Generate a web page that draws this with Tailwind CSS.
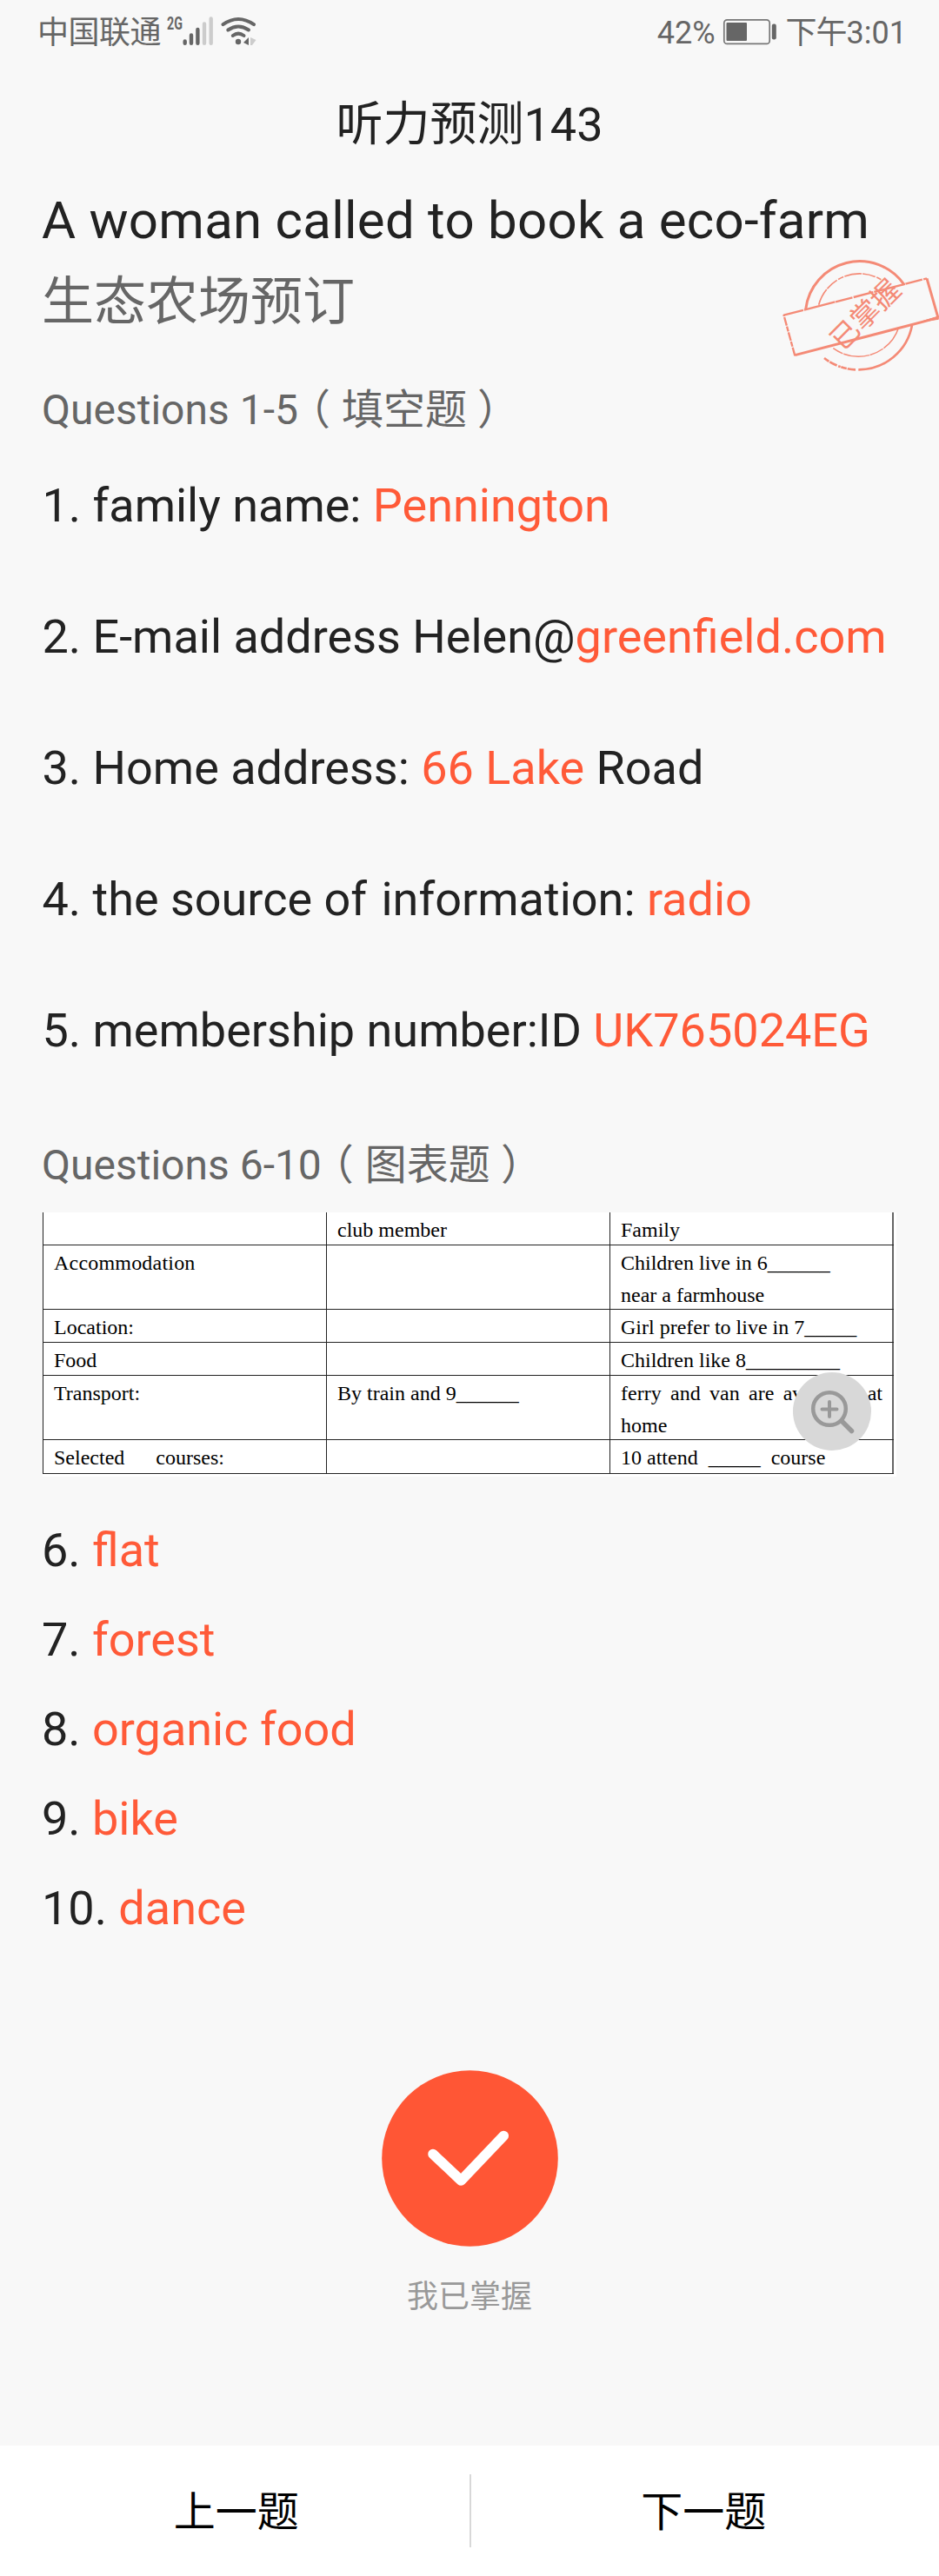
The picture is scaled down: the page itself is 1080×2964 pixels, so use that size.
<!DOCTYPE html>
<html lang="zh-CN">
<head>
    <meta charset="UTF-8">
    <meta name="viewport" content="width=device-width, initial-scale=1.0">
    <title>听力预测143</title>
    <script src="https://cdn.jsdelivr.net/npm/@tailwindcss/browser@4"></script>
</head>
<body class="bg-[#f8f8f8] text-[#222] font-['Roboto','Noto_Sans_CJK_SC',sans-serif]">
    <div class="w-[1080px] h-[2964px] flex flex-col overflow-hidden">
        <!-- Status bar -->
        <div class="h-[76px] shrink-0 flex justify-between pl-[43px] pr-[37px] text-[36px] leading-[76px] text-[#666]">
            <div class="flex">
                <span class="tracking-[-0.5px]">中国联通</span>
                <svg class="w-[106px] h-[76px] ml-[5px]" viewBox="190 0 106 76" fill="none">
                    <text x="192" y="34" font-size="21" font-weight="700" textLength="18" lengthAdjust="spacingAndGlyphs" fill="#666">2G</text>
                    <g stroke-width="4.4" stroke-linecap="round">
                        <path d="M212.7 47.5v2.3M220 40.5v9.3M227.4 34v15.8" stroke="#666"/>
                        <path d="M235 27.5v22.3M242.7 21.5v28.3" stroke="#ccc"/>
                    </g>
                    <g stroke="#666" stroke-width="4" stroke-linecap="round">
                        <path d="M256.500 28.200Q274 15.800 292 28.200"/>
                        <path d="M262.300 34.500Q274 26.500 286 34.500"/>
                        <path d="M267.800 41Q274 36.300 280.500 41"/>
                    </g>
                    <circle cx="274" cy="48" r="3.2" fill="#666"/>
                    <path d="M280 49L286 43V52Z" fill="#666"/>
                    <path d="M288 43L294.500 46L290 52H288Z" fill="#ccc"/>
                </svg>
            </div>
            <div class="flex">
                <span>42%</span>
                <svg class="w-[62px] h-[76px] ml-[8px] mr-[11px]" viewBox="831 0 62 76" fill="none">
                    <rect x="832.8" y="22.800" width="52.400" height="27.600" rx="3.500" stroke="#777" stroke-width="1.700"/>
                    <rect x="835.500" y="26" width="23.500" height="21" rx="1" fill="#666"/>
                    <rect x="887.800" y="27.500" width="5" height="18" rx="2.200" fill="#666"/>
                </svg>
                <span class="tracking-[-1px]">下午</span><span>3:01</span>
            </div>
        </div>

        <header class="h-[135px] shrink-0 text-[54px] leading-[136px] text-center">听力预测143</header>

        <main class="relative px-[48px]">
            <h1 class="text-[60px] leading-[85px] tracking-[0.25px] whitespace-nowrap">A woman called to book a eco-farm</h1>
            <p class="pt-[2px] text-[60px] leading-[99px] text-[#666]">生态农场预订</p>

            <!-- Stamp -->
            <svg class="absolute left-[880px] top-[69px] w-[200px] h-[160px]" viewBox="0 0 600 480" fill="none" stroke="#f48a76">
                <path d="M140 228A187 187 0 0 1 480 143" stroke-width="9"/>
                <path d="M507 283A187 187 0 0 1 322 436" stroke-width="8"/>
                <path d="M312 436A187 187 0 0 1 203 395" stroke-width="8" stroke-dasharray="28 3 20 2 8 5"/>
                <path d="M185 212A146 146 0 0 1 400 125" stroke-width="5" stroke-dasharray="60 3 45 5 20 4"/>
                <path d="M461 290A146 146 0 0 1 235 362" stroke-width="4.500" stroke-dasharray="90 3 50 2"/>
                <path d="M64 248L558 121" stroke-width="7" stroke-dasharray="70 3 110 2 60 4"/>
                <path d="M558 121L597 257" stroke-width="9"/>
                <path d="M597 257L103 386" stroke-width="9"/>
                <path d="M540 270L598 262L597 252Z" fill="#f48a76" stroke-width="3"/>
                <path d="M103 388L64 246" stroke-width="7" stroke-dasharray="30 3 18 3"/>
                <text x="346" y="280" transform="rotate(-45 346 246)" text-anchor="middle" font-size="98" fill="#f48a76" stroke="none">已掌握</text>
            </svg>

            <h2 class="text-[48px] leading-[150px] text-[#666]">Questions 1-5<span class="ml-[13px] mr-[13px] [font-feature-settings:'halt']">（</span>填空题<span class="ml-[12px] [font-feature-settings:'halt']">）</span></h2>
            <div class="flex flex-col gap-[82px] pl-[0.5px] text-[54px] leading-[69px] whitespace-nowrap">
                <p>1. family name: <span class="text-[#ff5a38]">Pennington</span></p>
                <p>2. E-mail address Helen@<span class="text-[#ff5a38]">greenfield.com</span></p>
                <p>3. Home address: <span class="text-[#ff5a38]">66 Lake</span> Road</p>
                <p>4. the source of<span class="ml-[3px]"> information: </span><span class="text-[#ff5a38]">radio</span></p>
                <p>5. membership number:ID <span class="text-[#ff5a38]">UK765024EG</span></p>
            </div>

            <h2 class="pt-[66px] text-[48px] leading-[109px] text-[#666]">Questions 6-10<span class="ml-[13px] mr-[13px] [font-feature-settings:'halt']">（</span>图表题<span class="ml-[12px] [font-feature-settings:'halt']">）</span></h2>

            <div class="relative ml-[1px] w-[982px] h-[304px] bg-white text-black text-[24px] leading-[36.5px] whitespace-nowrap font-['Liberation_Serif',serif]">
                <div class="w-[979px] grid grid-cols-[326px_326px_327px] grid-rows-[38px_74px_38px_38px_74px_39px] border-r-2 border-[#666] *:border-l *:border-b *:border-[#222] *:pl-[12px] *:pt-[2px]">
                    <div></div>
                    <div>club member</div>
                    <div>Family</div>
                    <div class="tracking-[0.2px]">Accommodation</div>
                    <div></div>
                    <div>Children live in 6______<br>near a farmhouse</div>
                    <div>Location:</div>
                    <div></div>
                    <div>Girl prefer to live in 7_____</div>
                    <div>Food</div>
                    <div></div>
                    <div>Children like 8_________</div>
                    <div>Transport:</div>
                    <div>By train and 9______</div>
                    <div class="pr-[13px]"><p class="flex justify-between"><span>ferry</span><span>and</span><span>van</span><span>are</span><span>available</span><span>at</span></p>home</div>
                    <div class="flex gap-[36px]"><span>Selected</span><span>courses:</span></div>
                    <div></div>
                    <div class="flex gap-[12px]"><span>10 attend</span><span>_____</span><span>course</span></div>
                </div>
                <svg class="absolute left-[863px] top-[184px] w-[90px] h-[90px]" viewBox="0 0 90 90" fill="none" stroke="#999" stroke-linecap="round">
                    <circle cx="45" cy="45" r="45" fill="#d8d8d8" stroke="none"/>
                    <circle cx="42" cy="42" r="18.800" stroke-width="4.500"/>
                    <path d="M56.500 56.500L67.500 67.500" stroke-width="5.500"/>
                    <path d="M33.500 42.500H50.500M42 34V51" stroke-width="4"/>
                </svg>
            </div>

            <div class="mt-[33px] text-[54px] leading-[103px]">
                <p>6. <span class="text-[#ff5a38]">flat</span></p>
                <p>7. <span class="text-[#ff5a38]">forest</span></p>
                <p>8. <span class="text-[#ff5a38]">organic food</span></p>
                <p>9. <span class="text-[#ff5a38]">bike</span></p>
                <p>10. <span class="text-[#ff5a38]">dance</span></p>
            </div>
        </main>

        <div class="mt-[135px] flex flex-col items-center">
            <svg class="w-[203px] h-[203px]" viewBox="0 0 203 203" fill="none">
                <circle cx="101.500" cy="101.500" r="101.300" fill="#ff5635"/>
                <path d="M59 96.500L91.300 127L140.300 75.500" stroke="#fff" stroke-width="11.500" stroke-linecap="round" stroke-linejoin="round"/>
            </svg>
            <span class="mt-[33px] text-[36px] leading-[50px] text-[#999]">我已掌握</span>
        </div>

        <footer class="mt-auto h-[150px] shrink-0 flex items-center bg-white text-black text-[48px]">
            <button class="flex-1 pt-[4px] pl-[4px] leading-[146px]">上一题</button>
            <div class="w-[2px] h-[84px] bg-[#d8d8d8]"></div>
            <button class="flex-1 pt-[4px] pr-[3px] leading-[146px]">下一题</button>
        </footer>
    </div>
</body>
</html>
